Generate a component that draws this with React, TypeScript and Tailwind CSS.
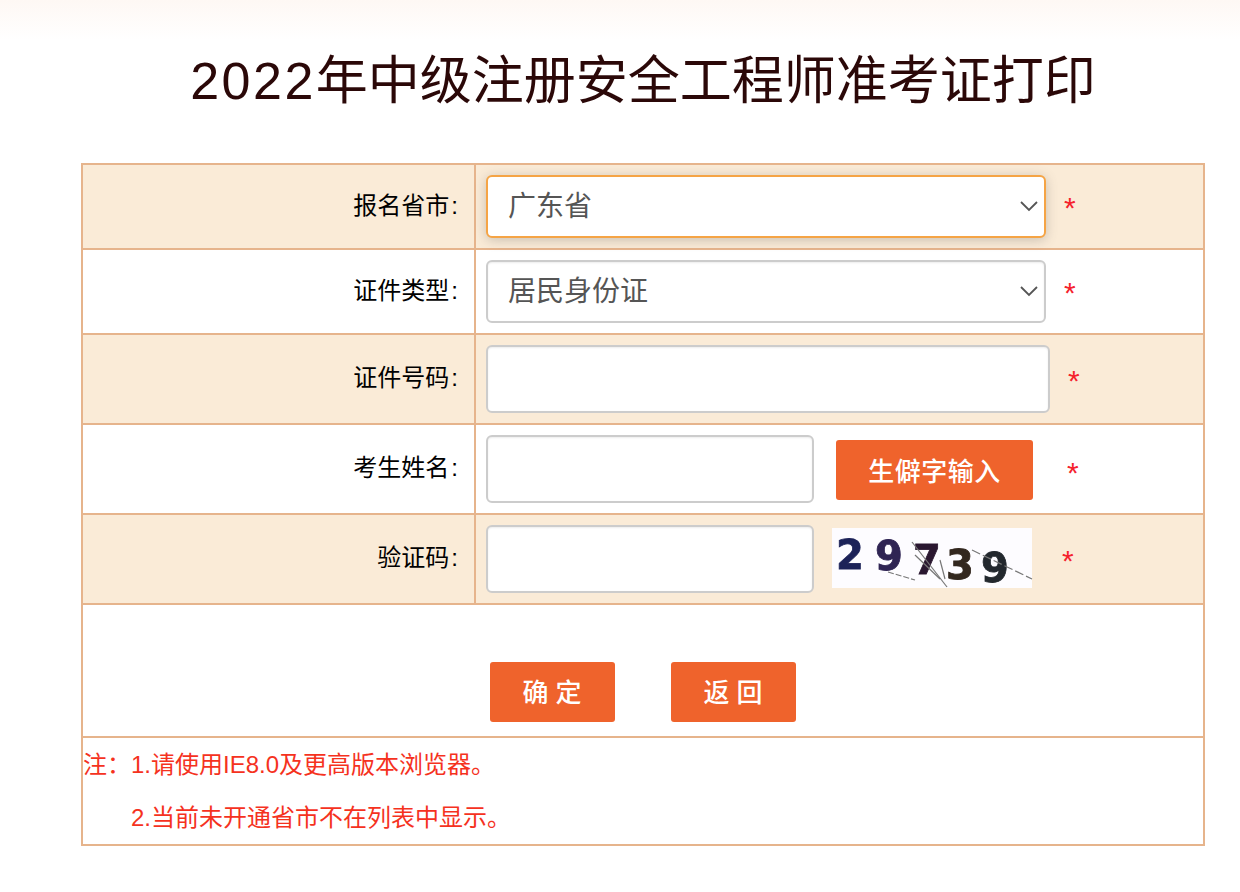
const FONT = "font-['Liberation_Sans','Noto_Sans_CJK_SC',sans-serif]";

function Star({ className }: { className: string }) {
  return <span className={`inline-block text-[30px] font-medium leading-none text-[#f5222d] ${className}`}>*</span>;
}

function Pick({ value, focused }: { value: string; focused?: boolean }) {
  return (
    <div className="relative h-[63px] w-[560px] shrink-0">
      <select
        defaultValue={value}
        className={`h-full w-full appearance-none rounded-[6px] border-2 bg-white pl-5 text-[28px] text-[#555] outline-none ${
          focused
            ? 'border-[#f5a445] shadow-[0_2px_12px_rgba(90,90,90,0.3)]'
            : 'border-[#cccccc] shadow-[inset_0_1px_2px_rgba(0,0,0,0.08)]'
        }`}
      >
        <option>{value}</option>
      </select>
      <svg width="18" height="12" viewBox="0 0 18 12" fill="none" className="pointer-events-none absolute right-[8px] top-[25px]">
        <path d="M1 2 L9 10 L17 2" stroke="#555" strokeWidth="1.8" />
      </svg>
    </div>
  );
}

function Field({ width }: { width: string }) {
  return (
    <input
      type="text"
      className={`h-[68px] shrink-0 rounded-[6px] border-2 border-[#cccccc] bg-white shadow-[inset_0_1px_2px_rgba(0,0,0,0.08)] outline-none ${width}`}
    />
  );
}

function Label({ text }: { text: string }) {
  return (
    <td className="border-2 border-[#e6b48c] pb-[2px] pr-[16px] text-right align-middle text-[24px] leading-none text-black">
      {text}
      <span className="ml-[2px]">:</span>
    </td>
  );
}

function Captcha() {
  return (
    <svg width="200" height="60" viewBox="0 0 200 60" className="-mt-[2px] ml-[18px] shrink-0 overflow-visible bg-[#fdfcff] blur-[0.4px]">
      <g fontFamily="'DejaVu Sans', sans-serif" fontWeight="700" fontSize="40" strokeWidth="0.8">
        <text x="4" y="41" fill="#1c2258" stroke="#1c2258">2</text>
        <text x="43" y="42" fill="#2f2453" stroke="#2f2453">9</text>
        <text x="81" y="46" fill="#2a1730" stroke="#2a1730">7</text>
        <text x="114" y="51" fill="#33281f" stroke="#33281f">3</text>
        <text x="149" y="54" fill="#23282e" stroke="#23282e">9</text>
      </g>
      <g stroke="#777" strokeWidth="1.2" fill="none">
        <path d="M56 44 L83 52" strokeDasharray="6 2" />
        <path d="M80 14 L115 59" />
        <path d="M83 27 L108 51" />
        <path d="M108 32 L113 51" />
        <path d="M140 22 L200 51" strokeDasharray="9 3" />
      </g>
    </svg>
  );
}

export default function App() {
  return (
    <div className={`min-h-[892px] bg-white bg-[linear-gradient(#fef8f4,#ffffff_40px)] ${FONT}`}>
      <h1 className="pl-[46px] pt-[49px] text-center text-[52px] font-normal leading-[64px] text-[#2b0808]">
        <span className="tracking-[2.5px]">2022</span>年中级注册安全工程师准考证打印
      </h1>

      <table className="ml-[81px] mt-[50px] w-[1124px] table-fixed border-collapse">
        <colgroup>
          <col className="w-[393px]" />
          <col />
        </colgroup>
        <tbody>
          <tr className="h-[85px] bg-[#faebd7]">
            <Label text="报名省市" />
            <td className="border-2 border-[#e6b48c] pl-[10px]">
              <div className="flex items-center">
                <Pick value="广东省" focused />
                <Star className="ml-[18px] mt-[3px]" />
              </div>
            </td>
          </tr>
          <tr className="h-[85px] bg-white">
            <Label text="证件类型" />
            <td className="border-2 border-[#e6b48c] pl-[10px]">
              <div className="flex items-center">
                <Pick value="居民身份证" />
                <Star className="ml-[18px] mt-[3px]" />
              </div>
            </td>
          </tr>
          <tr className="h-[90px] bg-[#faebd7]">
            <Label text="证件号码" />
            <td className="border-2 border-[#e6b48c] pl-[10px]">
              <div className="flex items-center">
                <Field width="w-[564px]" />
                <Star className="ml-[18px] mt-[4px]" />
              </div>
            </td>
          </tr>
          <tr className="h-[90px] bg-white">
            <Label text="考生姓名" />
            <td className="border-2 border-[#e6b48c] pl-[10px]">
              <div className="flex items-center">
                <Field width="w-[328px]" />
                <button className="ml-[22px] mt-[2px] h-[60px] w-[197px] shrink-0 rounded-[3px] bg-[#ef632c] pt-[5px] text-[26px] font-medium tracking-[0.5px] text-white">
                  生僻字输入
                </button>
                <Star className="ml-[34px] mt-[8px]" />
              </div>
            </td>
          </tr>
          <tr className="h-[90px] bg-[#faebd7]">
            <Label text="验证码" />
            <td className="border-2 border-[#e6b48c] pl-[10px]">
              <div className="flex items-center">
                <Field width="w-[328px]" />
                <Captcha />
                <Star className="ml-[30px] mt-[4px]" />
              </div>
            </td>
          </tr>
          <tr className="h-[133px] bg-white">
            <td colSpan={2} className="border-2 border-[#e6b48c] pb-[14px] pt-[57px]">
              <div className="flex justify-center gap-[56px] pr-[1px]">
                <button className="h-[60px] w-[125px] rounded-[3px] bg-[#ef632c] pt-[3px] text-[26px] font-medium text-white">确 定</button>
                <button className="h-[60px] w-[125px] rounded-[3px] bg-[#ef632c] pt-[3px] text-[26px] font-medium text-white">返 回</button>
              </div>
            </td>
          </tr>
          <tr className="bg-white">
            <td colSpan={2} className="border-2 border-[#e6b48c] text-[24px] leading-[53px] text-[#f5321e]">
              <div>注：1.请使用IE8.0及更高版本浏览器。</div>
              <div className="pl-[48px]">2.当前未开通省市不在列表中显示。</div>
            </td>
          </tr>
        </tbody>
      </table>
    </div>
  );
}
